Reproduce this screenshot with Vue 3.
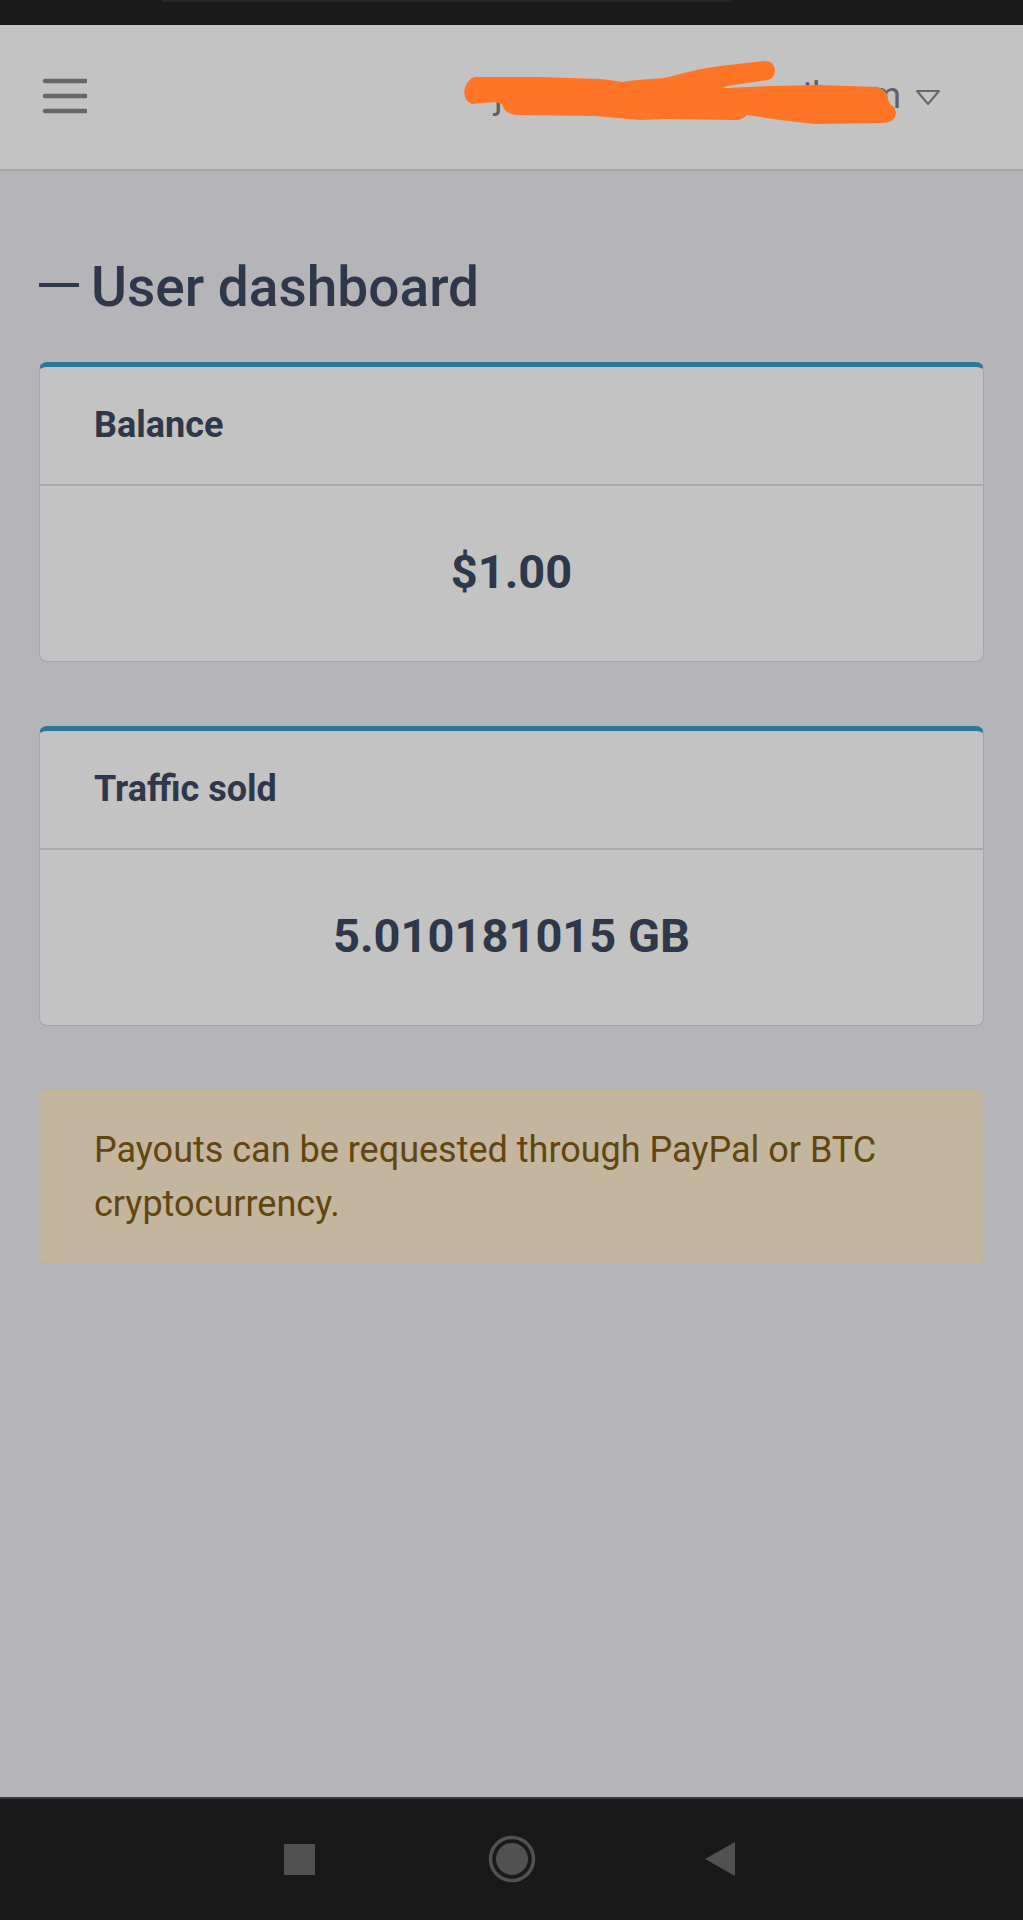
<script setup>
const cards = [
  { title: 'Balance', value: '$1.00' },
  { title: 'Traffic sold', value: '5.010181015 GB' },
]
</script>

<template>
  <div class="screen">
    <div class="status-bar"><span class="pill"></span></div>

    <header class="topbar">
      <button class="menu" type="button" aria-label="Menu">
        <svg width="46" height="36" viewBox="0 0 46 36" fill="none" stroke="#66666b" stroke-width="4.5" stroke-linecap="round">
          <path d="M4 3H45M4 18H45M4 33H45" />
        </svg>
      </button>

      <button class="account" type="button" aria-label="Account">
        <span class="email"><span>j</span><span>il.com</span></span>
        <svg class="caret" width="26" height="20" viewBox="0 0 26 20" fill="none" stroke="#68686c" stroke-width="2" stroke-linejoin="round">
          <path d="M2 5H24L13 18Z" />
        </svg>
        <svg class="scribble" width="440" height="72" viewBox="460 56 440 72" fill="#ff7426">
          <path d="M474 76H540L600 78Q612 79 622 81L637 79L664 77C685 72 702 67 720 65L765 60Q774 60 775 69Q775 77 768 79L727 85L723 87L728 87L770 85L820 84L878 86Q888 90 888 98Q889 103 894 106Q898 113 893 119Q890 122 880 122L815 123L780 119L747 114Q743 119 735 119L665 118L640 119L595 115L515 114Q504 112 502 103L495 101L472 103C461 100 462 81 474 76Z" />
        </svg>
      </button>
    </header>

    <main class="content">
      <h1 class="title"><span class="dash"></span>User dashboard</h1>

      <section v-for="card in cards" :key="card.title" class="card">
        <h2 class="card-head">{{ card.title }}</h2>
        <p class="card-value">{{ card.value }}</p>
      </section>

      <p class="notice" role="alert">Payouts can be requested through PayPal or BTC cryptocurrency.</p>
    </main>

    <nav class="system-nav" aria-label="System">
      <button type="button" aria-label="Recent apps">
        <svg width="48" height="48" viewBox="0 0 48 48" fill="#515151"><rect x="8" y="9" width="31" height="31" rx="1" /></svg>
      </button>
      <button type="button" aria-label="Home">
        <svg width="48" height="48" viewBox="0 0 48 48" fill="#515151">
          <circle cx="24" cy="24" r="16" />
          <circle cx="24" cy="24" r="21.5" fill="none" stroke="#515151" stroke-width="3.5" />
        </svg>
      </button>
      <button type="button" aria-label="Back">
        <svg width="48" height="48" viewBox="0 0 48 48" fill="#515151"><path d="M5 24L35 7V41Z" /></svg>
      </button>
    </nav>
  </div>
</template>

<style>
body {
  margin: 0;
  background: #b4b4b9;
}
</style>

<style scoped>
.screen {
  display: flex;
  flex-direction: column;
  min-height: 100vh;
  font-family: Roboto, "Liberation Sans", sans-serif;
  font-size: 36px;
  line-height: 54px;
  color: #2f374a;
  background: #b4b4b9;
}

button {
  display: flex;
  align-items: center;
  padding: 0;
  border: 0;
  background: none;
  font: inherit;
  color: inherit;
}

.status-bar {
  display: flex;
  justify-content: center;
  height: 25px;
  padding-right: 130px;
  background: #191919;
}

.pill {
  width: 64%;
  height: 2px;
  border-radius: 0 0 8px 8px;
  background: #262626;
}

.topbar {
  display: flex;
  align-items: center;
  justify-content: space-between;
  height: 142px;
  padding: 0 82px 2px 41px;
  border-bottom: 2px solid #a6a6ab;
  background: #c3c3c3;
}

.account {
  position: relative;
  gap: 14px;
  color: #5f6066;
}

.email {
  display: flex;
  justify-content: space-between;
  width: 407px;
}

.scribble {
  position: absolute;
  top: -12px;
  left: -34px;
}

.content {
  flex: 1;
  padding: 82px 39px 64px;
}

.title {
  display: flex;
  align-items: center;
  gap: 12px;
  margin: 0 0 41px;
  font-size: 55px;
  font-weight: 500;
  line-height: 68px;
}

.dash {
  width: 40px;
  height: 4px;
  margin-bottom: 4px;
  background: #2f374a;
}

.card {
  margin-bottom: 64px;
  border: 1px solid #a4a5aa;
  border-top: 5px solid #2c7899;
  border-radius: 8px;
  background: #c3c3c3;
}

.card-head {
  margin: 0;
  padding: 31px 54px 32px;
  border-bottom: 2px solid #a9aaad;
  font-size: 36px;
  font-weight: 700;
}

.card-value {
  margin: 0;
  padding: 50px 54px 53px;
  font-size: 47px;
  font-weight: 700;
  line-height: 72px;
  text-align: center;
}

.notice {
  margin: 0;
  padding: 32px 54px;
  border: 1px solid #c3b38e;
  border-radius: 8px;
  color: #614611;
  background: #c4b59e;
}

.system-nav {
  display: flex;
  align-items: center;
  justify-content: center;
  gap: 164px;
  height: 119px;
  padding-bottom: 2px;
  border-top: 2px solid #3a3a3e;
  background: #191919;
}
</style>
